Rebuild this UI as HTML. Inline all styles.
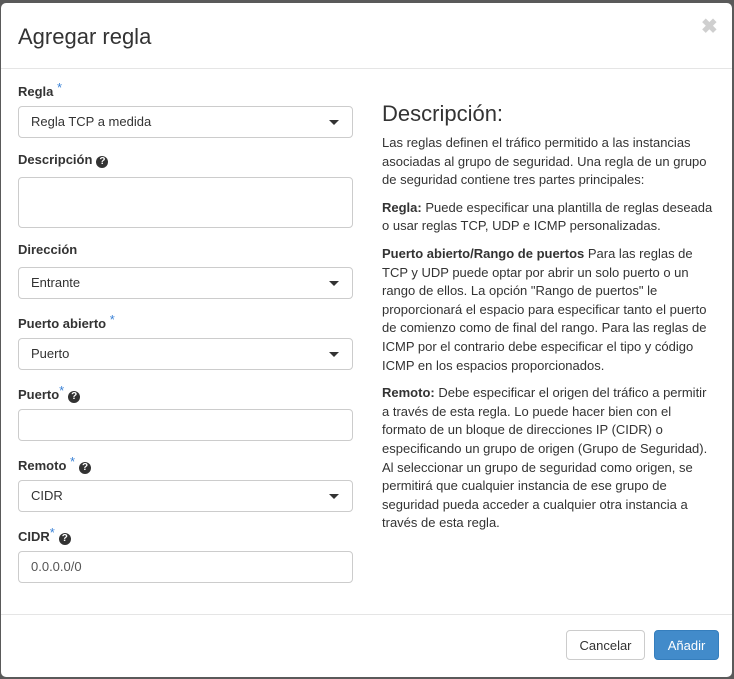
<!DOCTYPE html>
<html><head><meta charset="utf-8"><style>
body{margin:0;width:734px;height:679px;background:#5a5a5a;font-family:"Liberation Sans",sans-serif;color:#333;overflow:hidden;position:relative}
.m{position:absolute;left:1px;top:3px;width:731px;height:674px;background:#fff;border-radius:5px}
.a{position:absolute}
.t{left:17px;top:21px;font-size:22px;color:#333}
.x{left:700px;top:11px;font-size:20px;font-weight:bold;color:#cfcfcf}
.hr{left:0;right:0;height:1px;background:#e5e5e5}
.l{left:17px;font-size:13px;font-weight:bold;line-height:15px}
.l i{color:#3b82d6;font-style:normal;font-weight:normal;vertical-align:4px;font-size:13px}
.q{display:inline-block;width:12px;height:12px;border-radius:50%;background:#333;color:#fff;font-size:10px;text-align:center;line-height:12px;vertical-align:0px;margin-left:4px}
.f{left:17px;height:30px;border:1px solid #ccc;border-radius:4px;font-size:13px;line-height:30px;padding-left:12px;box-sizing:content-box;width:321px}
.f b{position:absolute;right:13px;top:13px;border-left:5px solid transparent;border-right:5px solid transparent;border-top:5px solid #333}
.r{left:381px;width:332px;font-size:13px;line-height:18.6px}
.r p{margin:0 0 9px}
.btn{top:627px;height:30px;border-radius:4px;font-size:13px;line-height:30px;text-align:center;box-sizing:border-box}
</style></head><body>
<div class="m">
<div class="a t">Agregar regla</div>
<div class="a x">✖</div>
<div class="a hr" style="top:65px"></div>
<div class="a l" style="top:77px">Regla <i>*</i></div>
<div class="a f" style="top:103px">Regla TCP a medida<b></b></div>
<div class="a l" style="top:149px">Descripción<span class="q">?</span></div>
<div class="a f" style="top:174px;height:49px"></div>
<div class="a l" style="top:239px">Dirección</div>
<div class="a f" style="top:264px">Entrante<b></b></div>
<div class="a l" style="top:309px">Puerto abierto <i>*</i></div>
<div class="a f" style="top:335px">Puerto<b></b></div>
<div class="a l" style="top:380px">Puerto<i>*</i><span class="q">?</span></div>
<div class="a f" style="top:406px"></div>
<div class="a l" style="top:451px">Remoto <i>*</i><span class="q">?</span></div>
<div class="a f" style="top:477px">CIDR<b></b></div>
<div class="a l" style="top:522px">CIDR<i>*</i><span class="q">?</span></div>
<div class="a f" style="top:548px;color:#555">0.0.0.0/0</div>
<div class="a" style="left:381px;top:98px;font-size:22px">Descripción:</div>
<div class="a r" style="top:131px">
<p>Las reglas definen el tráfico permitido a las instancias asociadas al grupo de seguridad. Una regla de un grupo de seguridad contiene tres partes principales:</p>
<p><b>Regla:</b> Puede especificar una plantilla de reglas deseada o usar reglas TCP, UDP e ICMP personalizadas.</p>
<p><b>Puerto abierto/Rango de puertos</b> Para las reglas de TCP y UDP puede optar por abrir un solo puerto o un rango de ellos. La opción "Rango de puertos" le proporcionará el espacio para especificar tanto el puerto de comienzo como de final del rango. Para las reglas de ICMP por el contrario debe especificar el tipo y código ICMP en los espacios proporcionados.</p>
<p><b>Remoto:</b> Debe especificar el origen del tráfico a permitir a través de esta regla. Lo puede hacer bien con el formato de un bloque de direcciones IP (CIDR) o especificando un grupo de origen (Grupo de Seguridad). Al seleccionar un grupo de seguridad como origen, se permitirá que cualquier instancia de ese grupo de seguridad pueda acceder a cualquier otra instancia a través de esta regla.</p>
</div>
<div class="a hr" style="top:611px"></div>
<div class="a btn" style="left:565px;width:79px;border:1px solid #ccc;color:#333">Cancelar</div>
<div class="a btn" style="left:653px;width:65px;background:#428bca;border:1px solid #357ebd;color:#fff">Añadir</div>
</div>
</body></html>
